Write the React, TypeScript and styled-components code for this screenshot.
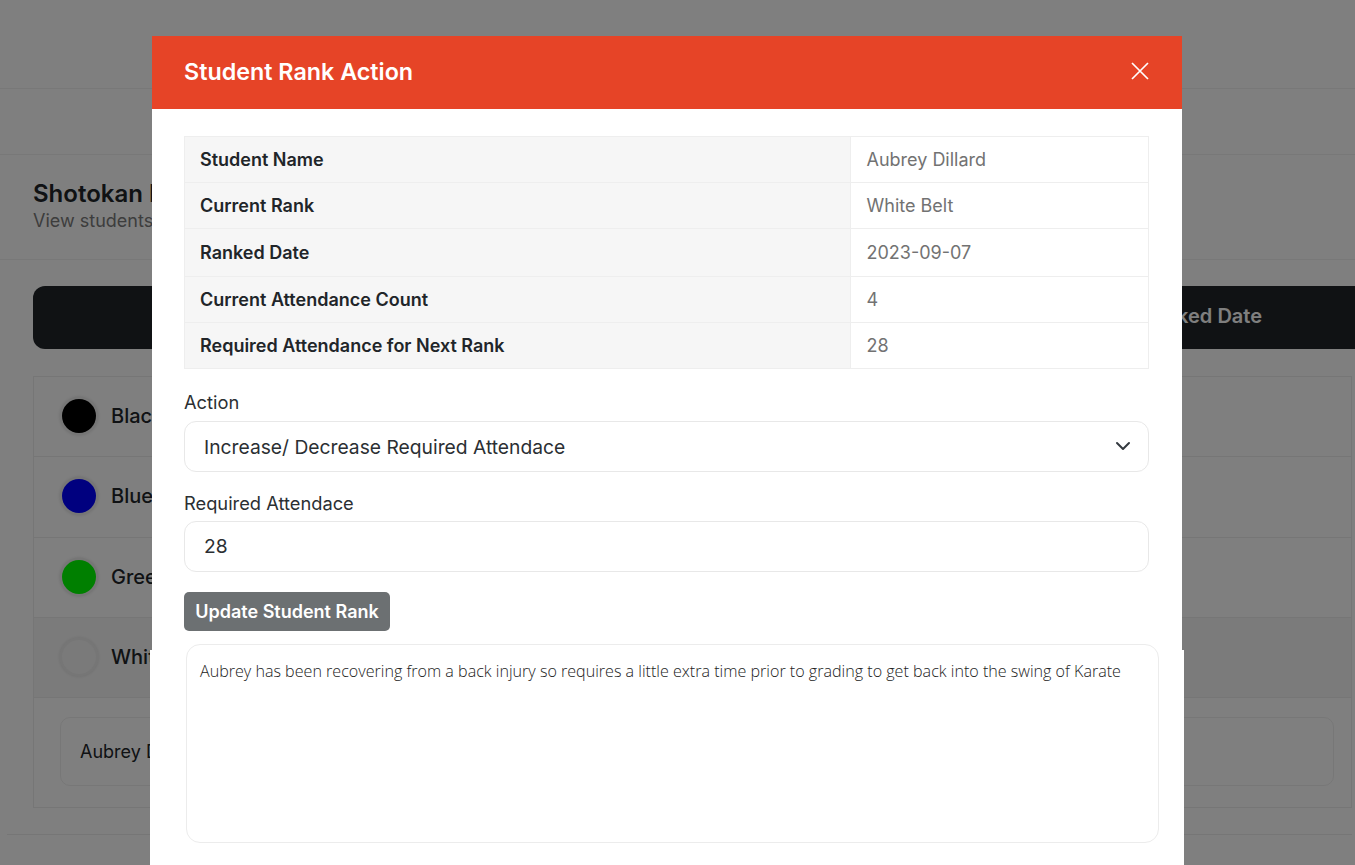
import React from "react";
import styled, { createGlobalStyle } from "styled-components";

const GlobalStyle = createGlobalStyle`
  html, body {
    margin: 0;
    height: 100%;
    overflow: hidden;
    background: #fff;
    font-family: Inter, "Liberation Sans", sans-serif;
    color: #212529;
  }
  * { box-sizing: border-box; }
`;

/* page behind the dialog */
const Page = styled.div`
  height: 865px;
  overflow: hidden;
`;

const TopBar = styled.div`
  height: 89px;
  border-bottom: 1px solid #f0f0f0;
`;

const NavBar = styled.div`
  height: 66px;
  border-bottom: 1px solid #f0f0f0;
`;

const Heading = styled.div`
  height: 105px;
  padding: 25px 33px 0;
  border-bottom: 1px solid #f0f0f0;
`;

const HeadingTitle = styled.h2`
  margin: 0;
  font-size: 24px;
  line-height: 28px;
  font-weight: 600;
`;

const HeadingSub = styled.p`
  margin: 0;
  font-size: 18px;
  line-height: 26px;
  color: #7a7a7a;
`;

const Content = styled.div`
  padding: 26px 3px 0 33px;
`;

const HeaderBar = styled.div`
  height: 63px;
  margin-right: -3px;
  padding: 0 93px 3px 0;
  border-radius: 12px 0 0 12px;
  background: #212529;
  color: #fff;
  font-size: 20px;
  font-weight: 600;
  display: flex;
  align-items: center;
  justify-content: flex-end;
`;

const RankList = styled.div`
  margin-top: 27px;
  border: 1px solid #ececec;
  height: 432px;
`;

const RankRow = styled.div<{ $active?: boolean }>`
  height: 80.25px;
  padding: 0 0 1px 26px;
  display: flex;
  align-items: center;
  gap: 13px;
  font-size: 20px;
  font-weight: 500;
  border-bottom: 1px solid #ececec;
  background: ${(p) => (p.$active ? "#f7f7f7" : "transparent")};
`;

const Belt = styled.span<{ $color: string }>`
  width: 34px;
  height: 34px;
  margin: 0 2px;
  border-radius: 50%;
  background: ${(p) => p.$color};
  box-shadow: 0 0 0 2.5px #ececec, 0 0 3px 3px rgba(0, 0, 0, 0.08);
`;

const StudentPanel = styled.div`
  padding: 19px 17px 20px 26px;
`;

const StudentCard = styled.div`
  height: 69px;
  padding-left: 19px;
  display: flex;
  align-items: center;
  font-size: 18px;
  border: 1px solid #efefef;
  border-radius: 10px;
`;

const Footer = styled.div`
  margin: 26px 3px 0 7px;
  border-top: 1px solid #ececec;
`;

/* dialog */
const Backdrop = styled.div`
  position: fixed;
  inset: 0;
  padding: 36px 0 0 152px;
  background: rgba(0, 0, 0, 0.5);
  overflow: hidden;
`;

const Dialog = styled.div`
  width: 1030px;
  height: 900px;
  background: #fff;
`;

const DialogHeader = styled.div`
  height: 73px;
  padding: 0 32px 3px;
  background: #e64427;
  display: flex;
  align-items: center;
  justify-content: space-between;
`;

const DialogTitle = styled.h3`
  margin: 0;
  color: #fff;
  font-size: 23.3px;
  font-weight: 600;
`;

const CloseButton = styled.button`
  width: 20px;
  height: 20px;
  padding: 0;
  border: 0;
  background: none;
  color: #fff;
  display: flex;
  align-items: center;
  justify-content: center;
`;

const DialogBody = styled.div`
  padding: 27px 33px 0 32px;
`;

const InfoTable = styled.table`
  width: 965px;
  border-collapse: collapse;
  font-size: 18px;
  table-layout: fixed;
`;

const InfoRow = styled.tr`
  height: 46px;

  &:nth-child(3) {
    height: 48px;
  }
`;

const InfoKey = styled.th`
  width: 666px;
  padding: 0 15px;
  text-align: left;
  font-weight: 600;
  color: #212529;
  background: #f6f6f6;
  border: 1px solid #eeeeee;
`;

const InfoValue = styled.td`
  padding: 0 15.5px;
  color: #727272;
  border: 1px solid #eeeeee;
`;

const FieldLabel = styled.label`
  display: block;
  margin-bottom: 6px;
  font-size: 18.3px;
  line-height: 24px;
  color: #2b2f33;
`;

const Field = styled.div`
  position: relative;
  margin-bottom: 20px;
`;

const FirstField = styled(Field)`
  margin-top: 21px;
  margin-bottom: 18.5px;

  ${FieldLabel} {
    margin-bottom: 7px;
  }
`;

const SelectInput = styled.select`
  display: block;
  width: 100%;
  height: 51px;
  padding: 0 40px 0 19px;
  appearance: none;
  background: #fff;
  border: 1px solid #e8e8e8;
  border-radius: 12px;
  color: #2b2f33;
  font: 400 19.25px Inter, "Liberation Sans", sans-serif;
`;

const SelectChevron = styled.svg`
  position: absolute;
  right: 18px;
  bottom: 18px;
  width: 16px;
  height: 16px;
  pointer-events: none;
`;

const TextInput = styled.input`
  display: block;
  width: 100%;
  height: 51px;
  padding: 0 19px;
  background: #fff;
  border: 1px solid #e8e8e8;
  border-radius: 12px;
  color: #2b2f33;
  font: 400 19.25px Inter, "Liberation Sans", sans-serif;
`;

const SubmitButton = styled.button`
  display: block;
  width: 206px;
  height: 39px;
  padding: 0;
  border: 0;
  border-radius: 5px;
  background: #6c7072;
  color: #fff;
  font: 600 18px Inter, "Liberation Sans", sans-serif;
`;

const NoteBlock = styled.div`
  display: flow-root;
  width: 1033.5px;
  height: 240px;
  margin: 19px 0 0 -34px;
  padding-left: 36px;
  background: #fff;
`;

const NoteArea = styled.textarea`
  display: block;
  width: 973px;
  height: 199px;
  margin-top: -6px;
  padding: 15px 13px;
  resize: none;
  background: #fff;
  border: 1px solid #ececec;
  border-radius: 14px;
  color: #222;
  font: 300 16.1px/1.4 "Open Sans", "Liberation Sans", sans-serif;
`;

const info = [
  ["Student Name", "Aubrey Dillard"],
  ["Current Rank", "White Belt"],
  ["Ranked Date", "2023-09-07"],
  ["Current Attendance Count", "4"],
  ["Required Attendance for Next Rank", "28"],
];

const belts = [
  ["Black Belt", "#000000"],
  ["Blue Belt", "#0000ff"],
  ["Green Belt", "#00ff00"],
  ["White Belt", "#f4f4f4"],
];

export default function App() {
  return (
    <>
      <GlobalStyle />
      <Page>
        <TopBar />
        <NavBar />
        <Heading>
          <HeadingTitle>Shotokan Ranks</HeadingTitle>
          <HeadingSub>View students by rank</HeadingSub>
        </Heading>
        <Content>
          <HeaderBar>Ranked Date</HeaderBar>
          <RankList>
            {belts.map(([name, color], i) => (
              <RankRow key={name} $active={i === 3}>
                <Belt $color={color} />
                {name}
              </RankRow>
            ))}
            <StudentPanel>
              <StudentCard>Aubrey Dillard</StudentCard>
            </StudentPanel>
          </RankList>
        </Content>
        <Footer />
      </Page>

      <Backdrop>
        <Dialog>
          <DialogHeader>
            <DialogTitle>Student Rank Action</DialogTitle>
            <CloseButton aria-label="Close">
              <svg width="18" height="18" viewBox="0 0 18 18" fill="none" stroke="currentColor" strokeWidth="1.7">
                <path d="M1 1l16 16M17 1L1 17" />
              </svg>
            </CloseButton>
          </DialogHeader>
          <DialogBody>
            <InfoTable>
              <tbody>
                {info.map(([key, value]) => (
                  <InfoRow key={key}>
                    <InfoKey>{key}</InfoKey>
                    <InfoValue>{value}</InfoValue>
                  </InfoRow>
                ))}
              </tbody>
            </InfoTable>

            <FirstField>
              <FieldLabel>Action</FieldLabel>
              <SelectInput defaultValue="change">
                <option value="change">Increase/ Decrease Required Attendace</option>
              </SelectInput>
              <SelectChevron viewBox="0 0 16 16" fill="none" stroke="#343a40" strokeWidth="2" strokeLinecap="round" strokeLinejoin="round">
                <path d="M2 5l6 6 6-6" />
              </SelectChevron>
            </FirstField>

            <Field>
              <FieldLabel>Required Attendace</FieldLabel>
              <TextInput defaultValue="28" />
            </Field>

            <SubmitButton>Update Student Rank</SubmitButton>

            <NoteBlock>
              <NoteArea defaultValue="Aubrey has been recovering from a back injury so requires a little extra time prior to grading to get back into the swing of Karate" />
            </NoteBlock>
          </DialogBody>
        </Dialog>
      </Backdrop>
    </>
  );
}
